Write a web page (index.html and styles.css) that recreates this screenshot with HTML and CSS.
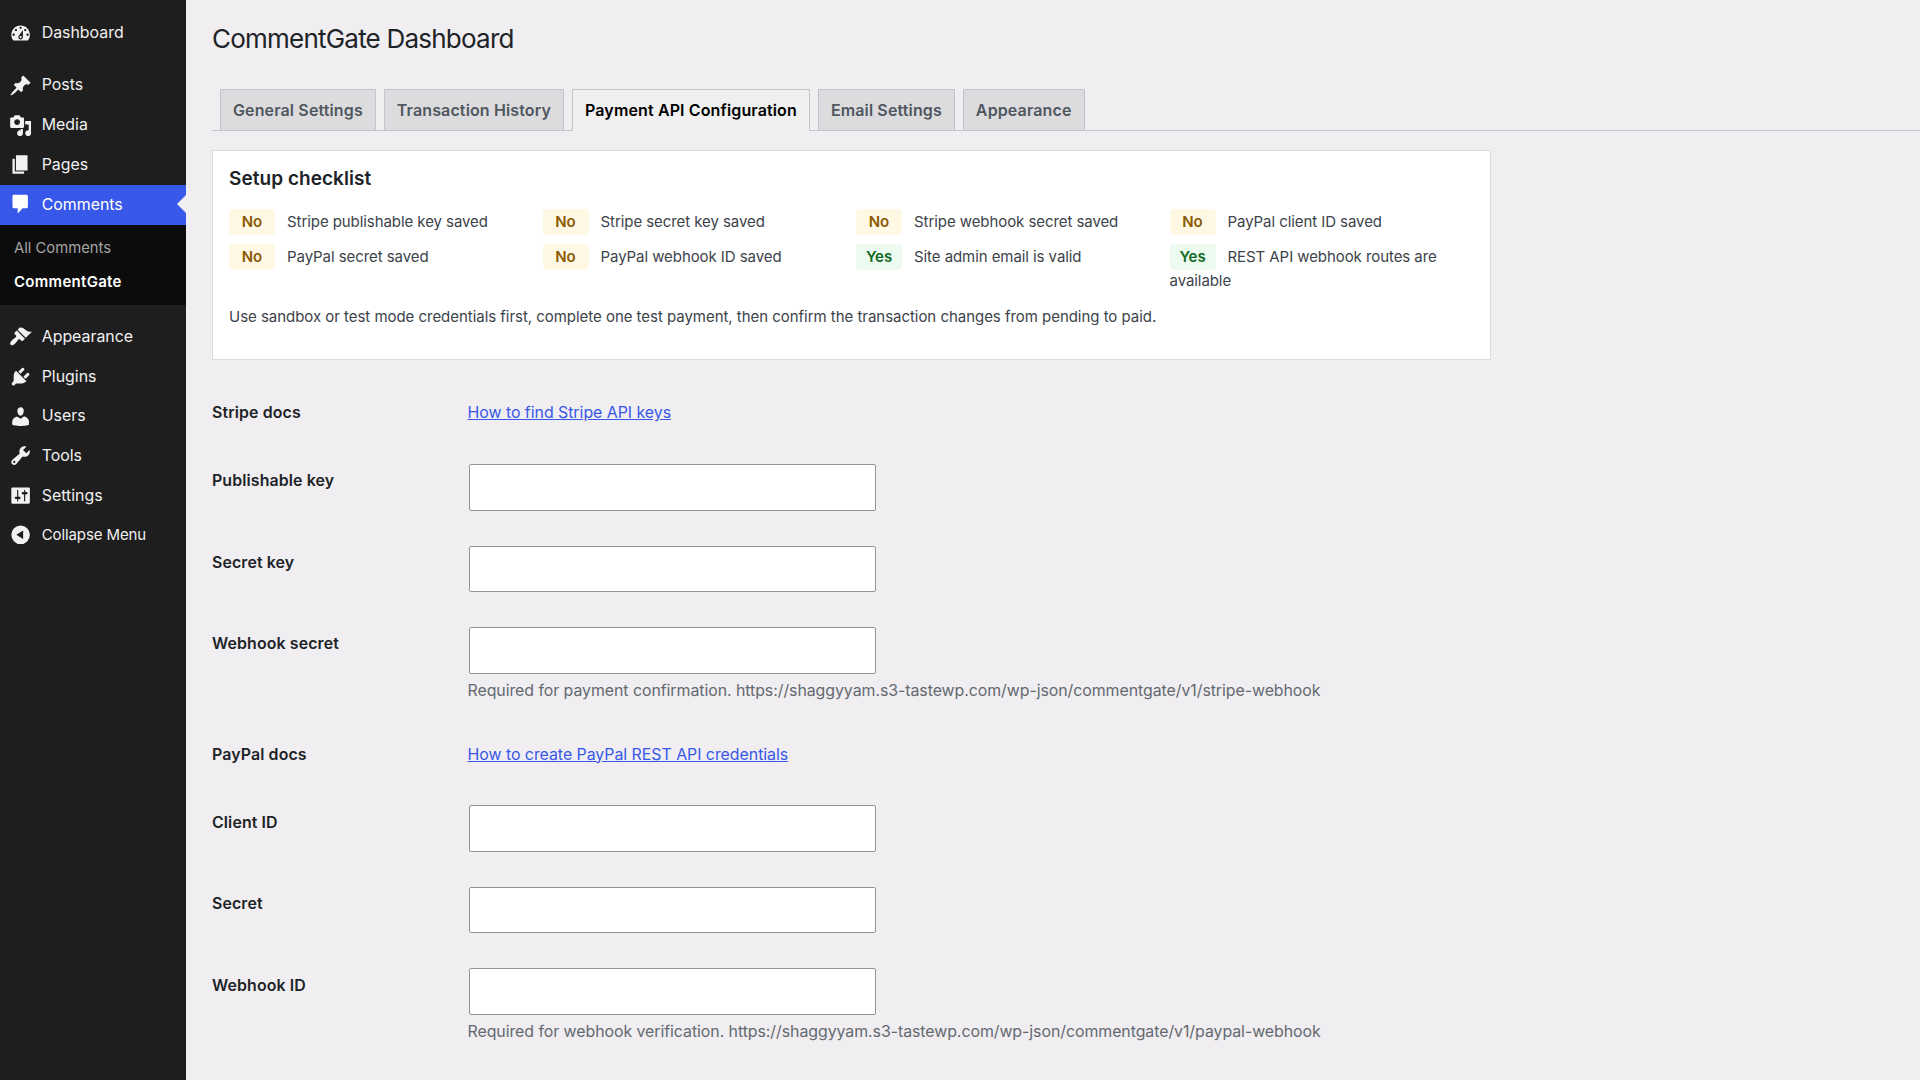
FILE: index.html
```html
<!DOCTYPE html>
<html lang="en">
<head>
    <meta charset="UTF-8">
    <meta name="viewport" content="width=device-width, initial-scale=1.0">
    <title>CommentGate Dashboard</title>
    <link rel="stylesheet" href="styles.css">
</head>
<body>
    <nav class="sidebar">
        <ul class="menu">
            <li><a href="#"><svg viewBox="0 0 20 20"><path d="M3.76 16h12.48c1.1-1.37 1.76-3.11 1.76-5 0-4.42-3.58-8-8-8s-8 3.58-8 8c0 1.89.66 3.63 1.76 5zM10 4c.55 0 1 .45 1 1s-.45 1-1 1-1-.45-1-1 .45-1 1-1zM6 6c.55 0 1 .45 1 1s-.45 1-1 1-1-.45-1-1 .45-1 1-1zm8 0c.55 0 1 .45 1 1s-.45 1-1 1-1-.45-1-1 .45-1 1-1zm-5.37 5.55L12 7v6c0 1.1-.9 2-2 2s-2-.9-2-2c0-.57.24-1.08.63-1.45zM4 10c.55 0 1 .45 1 1s-.45 1-1 1-1-.45-1-1 .45-1 1-1zm12 0c.55 0 1 .45 1 1s-.45 1-1 1-1-.45-1-1 .45-1 1-1zm-5 3c0-.55-.45-1-1-1s-1 .45-1 1 .45 1 1 1 1-.45 1-1z"/></svg>Dashboard</a></li>
            <li class="separator"></li>
            <li><a href="#"><svg viewBox="0 0 20 20"><path d="M10.44 3.02l1.82-1.82 6.36 6.35-1.83 1.82c-1.05-.68-2.48-.57-3.41.36l-.75.75c-.92.93-1.04 2.35-.35 3.41l-1.83 1.82-2.41-2.41-2.8 2.79c-.42.42-3.38 2.71-3.8 2.29s1.86-3.39 2.28-3.81l2.79-2.79L4.1 9.36l1.83-1.82c1.05.69 2.48.57 3.4-.36l.75-.75c.93-.92 1.05-2.35.36-3.41z"/></svg>Posts</a></li>
            <li><a href="#"><svg viewBox="0 0 20 20"><path d="M13 11V4c0-.55-.45-1-1-1h-1.67L9 1H5L3.67 3H2c-.55 0-1 .45-1 1v7c0 .55.45 1 1 1h10c.55 0 1-.45 1-1zM7 4.5c1.38 0 2.5 1.12 2.5 2.5S8.38 9.5 7 9.5 4.5 8.38 4.5 7 5.62 4.5 7 4.5zM14 6h5v10.5c0 1.38-1.12 2.5-2.5 2.5S14 17.88 14 16.5s1.12-2.5 2.5-2.5c.17 0 .34.02.5.05V9h-3V6zm-4 8.05V13h2v3.5c0 1.38-1.12 2.5-2.5 2.5S7 17.88 7 16.5 8.12 14 9.5 14c.17 0 .34.02.5.05z"/></svg>Media</a></li>
            <li><a href="#"><svg viewBox="0 0 20 20"><path d="M6 15V2h10v13H6zm-1 1h8v2H3V5h2v11z"/></svg>Pages</a></li>
            <li class="current">
                <a href="#"><svg viewBox="0 0 20 20"><path d="M4.3 1.6H15c.8 0 1.3.5 1.3 1.3v8.9c0 .8-.5 1.3-1.3 1.3h-3.3l-4.2 4.6v-4.6H4.3c-.8 0-1.3-.5-1.3-1.3V2.9c0-.8.5-1.3 1.3-1.3z"/></svg>Comments</a>
                <ul class="submenu">
                    <li><a href="#">All Comments</a></li>
                    <li class="active"><a href="#">CommentGate</a></li>
                </ul>
            </li>
            <li class="separator"></li>
            <li><a href="#"><svg viewBox="0 0 20 20"><path d="M14.48 11.06L7.41 3.99l1.5-1.5c.5-.56 2.3-.47 3.51.32 1.21.8 1.43 1.28 2.91 2.1 1.18.64 2.45 1.26 4.45.85zm-.71.71L6.7 4.7 4.93 6.47c-.39.39-.39 1.02 0 1.41l1.06 1.06c.39.39.39 1.03 0 1.42-.6.6-1.43 1.11-2.21 1.69-.35.26-.7.53-1.01.84C1.43 14.23.4 16.08 1.4 17.07c.99 1 2.84-.03 4.18-1.36.31-.31.58-.66.85-1.02.57-.78 1.08-1.61 1.69-2.21.39-.39 1.02-.39 1.41 0l1.06 1.06c.39.39 1.02.39 1.41 0z"/></svg>Appearance</a></li>
            <li><a href="#"><svg viewBox="0 0 20 20"><path d="M13.11 4.36L9.87 7.6 8 5.73l3.24-3.24c.35-.34 1.05-.2 1.56.32.52.51.66 1.21.31 1.55zm-8 1.77l.91-1.12 9.01 9.01-1.19.84c-.71.71-2.63 1.16-3.82 1.16H6.14L4.9 17.26c-.59.59-1.54.59-2.12 0-.59-.58-.59-1.53 0-2.12l1.24-1.24v-3.88c0-1.13.4-3.19 1.09-3.89zm7.26 3.97l3.24-3.24c.34-.35 1.04-.21 1.55.31.52.51.66 1.21.31 1.55l-3.24 3.25z"/></svg>Plugins</a></li>
            <li><a href="#"><svg viewBox="0 0 20 20"><path d="M10 9.25c-2.27 0-2.73-3.44-2.73-3.44C7 4.02 7.82 2 9.97 2c2.16 0 2.98 2.02 2.71 3.81 0 0-.41 3.44-2.68 3.44zm0 2.57L12.72 10c2.39 0 4.52 2.33 4.52 4.53v2.49s-3.65 1.13-7.24 1.13c-3.65 0-7.24-1.13-7.24-1.13v-2.49c0-2.25 1.94-4.48 4.47-4.48z"/></svg>Users</a></li>
            <li><a href="#"><svg viewBox="0 0 20 20"><path d="M16.68 9.77c-1.34 1.34-3.3 1.67-4.95.99l-5.41 6.52c-.99.99-2.59.99-3.58 0s-.99-2.59 0-3.57l6.52-5.42c-.68-1.65-.35-3.61.99-4.95 1.28-1.28 3.12-1.62 4.72-1.06l-2.89 2.89 2.82 2.82 2.86-2.87c.53 1.58.18 3.39-1.08 4.65zM3.81 16.21c.4.39 1.04.39 1.43 0 .4-.4.4-1.04 0-1.43-.39-.4-1.03-.4-1.43 0-.39.39-.39 1.03 0 1.43z"/></svg>Tools</a></li>
            <li><a href="#"><svg viewBox="0 0 20 20"><path d="M18 16V4c0-.55-.45-1-1-1H3c-.55 0-1 .45-1 1v12c0 .55.45 1 1 1h14c.55 0 1-.45 1-1zM8 11h1c.55 0 1 .45 1 1s-.45 1-1 1H8v1.5c0 .28-.22.5-.5.5s-.5-.22-.5-.5V13H6c-.55 0-1-.45-1-1s.45-1 1-1h1V5.5c0-.28.22-.5.5-.5s.5.22.5.5V11zm5-2h-1c-.55 0-1-.45-1-1s.45-1 1-1h1V5.5c0-.28.22-.5.5-.5s.5.22.5.5V7h1c.55 0 1 .45 1 1s-.45 1-1 1h-1v5.5c0 .28-.22.5-.5.5s-.5-.22-.5-.5V9z"/></svg>Settings</a></li>
            <li class="collapse"><a href="#"><svg viewBox="0 0 20 20"><path fill-rule="evenodd" d="M10 2.2a8 8 0 1 0 0 16 8 8 0 0 0 0-16zM12.2 6.4v7.4L6.3 10.1z"/></svg>Collapse Menu</a></li>
        </ul>
    </nav>

    <main class="wrap">
        <h1>CommentGate Dashboard</h1>

        <div class="tabs">
            <a href="#" class="tab">General Settings</a>
            <a href="#" class="tab">Transaction History</a>
            <a href="#" class="tab tab-active">Payment API Configuration</a>
            <a href="#" class="tab">Email Settings</a>
            <a href="#" class="tab">Appearance</a>
        </div>

        <section class="checklist">
            <h2>Setup checklist</h2>
            <div class="checks">
                <div><span class="badge no">No</span>Stripe publishable key saved</div>
                <div><span class="badge no">No</span>Stripe secret key saved</div>
                <div><span class="badge no">No</span>Stripe webhook secret saved</div>
                <div><span class="badge no">No</span>PayPal client ID saved</div>
                <div><span class="badge no">No</span>PayPal secret saved</div>
                <div><span class="badge no">No</span>PayPal webhook ID saved</div>
                <div><span class="badge yes">Yes</span>Site admin email is valid</div>
                <div><span class="badge yes">Yes</span>REST API webhook routes are available</div>
            </div>
            <p>Use sandbox or test mode credentials first, complete one test payment, then confirm the transaction changes from pending to paid.</p>
        </section>

        <form class="settings">
            <div class="row docs">
                <label>Stripe docs</label>
                <div class="field"><a href="#">How to find Stripe API keys</a></div>
            </div>
            <div class="row">
                <label for="stripe-public">Publishable key</label>
                <div class="field"><input type="text" id="stripe-public"></div>
            </div>
            <div class="row">
                <label for="stripe-secret">Secret key</label>
                <div class="field"><input type="password" id="stripe-secret"></div>
            </div>
            <div class="row">
                <label for="stripe-webhook">Webhook secret</label>
                <div class="field">
                    <input type="password" id="stripe-webhook">
                    <p class="description">Required for payment confirmation. https://shaggyyam.s3-tastewp.com/wp-json/commentgate/v1/stripe-webhook</p>
                </div>
            </div>
            <div class="row docs">
                <label>PayPal docs</label>
                <div class="field"><a href="#">How to create PayPal REST API credentials</a></div>
            </div>
            <div class="row">
                <label for="paypal-client">Client ID</label>
                <div class="field"><input type="text" id="paypal-client"></div>
            </div>
            <div class="row">
                <label for="paypal-secret">Secret</label>
                <div class="field"><input type="password" id="paypal-secret"></div>
            </div>
            <div class="row">
                <label for="paypal-webhook">Webhook ID</label>
                <div class="field">
                    <input type="text" id="paypal-webhook">
                    <p class="description">Required for webhook verification. https://shaggyyam.s3-tastewp.com/wp-json/commentgate/v1/paypal-webhook</p>
                </div>
            </div>
        </form>
    </main>
</body>
</html>
```
FILE: styles.css
```css
* {
    box-sizing: border-box;
}
body {
    margin: 0;
    display: flex;
    height: 1080px;
    overflow: hidden;
    background-color: #f0eef1;
    color: #3c434a;
    font-family: Inter, "Liberation Sans", sans-serif;
    font-size: 15px;
    line-height: 1.4;
}
ul {
    list-style: none;
    margin: 0;
    padding: 0;
}

/* Sidebar */
.sidebar {
    width: 186px;
    flex-shrink: 0;
    background-color: #1e1e1e;
}
.menu {
    padding-top: 13.5px;
}
.menu a {
    display: flex;
    align-items: center;
    height: 39.7px;
    padding-left: 9px;
    color: #f0f0f1;
    font-size: 15.9px;
    text-decoration: none;
}
.menu svg {
    width: 23.2px;
    height: 23.2px;
    margin-right: 9.5px;
    fill: #f3f1f1;
}
.separator {
    height: 12.6px;
}
.menu .current > a {
    position: relative;
    background-color: #3858e9;
    color: #fff;
}
.current > a svg {
    fill: #fff;
}
.current > a::after {
    content: "";
    position: absolute;
    right: 0;
    top: 50%;
    margin-top: -9.3px;
    border: 9.3px solid transparent;
    border-left: none;
    border-right-color: #f0eef1;
}
.submenu {
    padding: 8px 0 7.4px;
    background-color: #0c0c0c;
}
.menu .submenu a {
    height: 32.3px;
    padding-left: 14px;
    color: #a5a5a5;
    font-size: 14.8px;
}
.menu .submenu .active a {
    padding-top: 1px;
    color: #fff;
    font-size: 15px;
    font-weight: 600;
    letter-spacing: 0.3px;
}
.menu .collapse a {
    height: 38.5px;
    font-size: 15px;
    letter-spacing: -0.1px;
}

/* Content */
.wrap {
    flex: 1;
    padding: 0 0 0 26px;
}
h1 {
    margin: 0;
    padding-top: 21px;
    color: #1d2327;
    font-size: 26px;
    font-weight: 400;
    line-height: 36px;
    letter-spacing: -0.78px;
}
.tabs {
    display: flex;
    gap: 8px;
    margin-top: 32px;
    padding-left: 8px;
    height: 42px;
    border-bottom: 1px solid #c3c4c7;
}
.tab {
    height: 42px;
    padding: 0 12px;
    border: 1px solid #c3c4c7;
    background-color: #dcdcde;
    color: #50575e;
    font-size: 16px;
    font-weight: 600;
    line-height: 41px;
    letter-spacing: 0.13px;
    text-decoration: none;
}
.tab-active {
    border-bottom-color: #f0f0f1;
    background-color: #f0f0f1;
    color: #000;
}

/* Setup checklist */
.checklist {
    width: 1279px;
    height: 210px;
    margin-top: 19px;
    padding: 16px;
    border: 1px solid #dcdcde;
    background-color: #fff;
    letter-spacing: -0.07px;
}
.checklist h2 {
    margin: 0 0 18px;
    color: #1d2327;
    font-size: 19px;
    font-weight: 600;
    line-height: 24px;
    letter-spacing: 0.05px;
}
.checks {
    display: grid;
    grid-template-columns: repeat(4, 1fr);
    gap: 9px;
    line-height: 21px;
}
.badge {
    display: inline-block;
    width: 46px;
    margin-right: 12px;
    border-radius: 4px;
    font-weight: 600;
    line-height: 26px;
    text-align: center;
}
.no {
    background-color: #fff8e5;
    color: #8a5a00;
}
.yes {
    background-color: #edfaef;
    color: #116b24;
}
.checklist p {
    margin: 15px 0 0;
    letter-spacing: -0.035px;
}

/* Settings form */
.settings {
    margin-top: 18.7px;
    font-size: 15.9px;
}
.row {
    display: flex;
    padding-bottom: 17.5px;
    line-height: 21px;
}
.row label {
    width: 255.5px;
    padding-top: 23.8px;
    color: #1d2327;
    font-weight: 600;
    letter-spacing: 0.12px;
}
.field {
    padding-top: 17.5px;
}
.row.docs {
    height: 68px;
}
.docs .field {
    padding-top: 23.8px;
}
.field a {
    color: #3858e9;
    letter-spacing: -0.03px;
}
input {
    display: block;
    width: 407px;
    height: 46.5px;
    margin-left: 1px;
    border: 1px solid #949494;
    border-radius: 2px;
    background-color: #fff;
}
.description {
    margin: 6.3px 0 1.3px;
    color: #646970;
    letter-spacing: -0.055px;
}
```
